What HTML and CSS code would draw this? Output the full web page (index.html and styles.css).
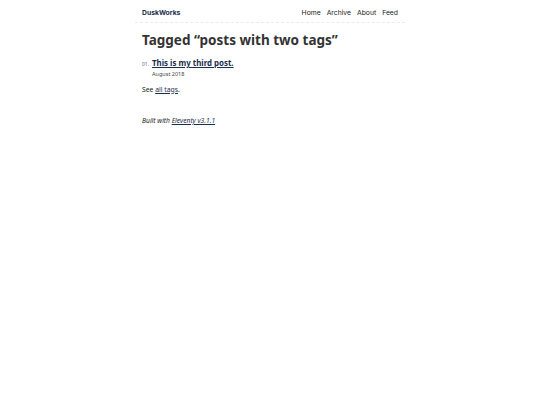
FILE: index.html
```html
<!DOCTYPE html>
<html lang="en">
<head>
<meta charset="utf-8">
<title>Tagged posts with two tags</title>
<link rel="stylesheet" href="styles.css">
</head>
<body>
<header class="site-header">
  <a class="home-link" href="#">DuskWorks</a>
  <nav class="nav">
    <a href="#">Home</a>
    <a href="#">Archive</a>
    <a href="#">About</a>
    <a href="#">Feed</a>
  </nav>
</header>
<main class="main">
  <h1 class="title">Tagged “posts with two tags”</h1>
  <ol class="postlist">
    <li class="post-item">
      <span class="post-num">01.</span>
      <div class="post-body">
        <a class="post-link" href="#">This is my third post.</a>
        <time class="post-date">August 2018</time>
      </div>
    </li>
  </ol>
  <p class="see">See <a href="#">all tags</a>.</p>
</main>
<footer class="footer">
  <p><em>Built with <a href="#">Eleventy v3.1.1</a></em></p>
</footer>
</body>
</html>
```
FILE: styles.css
```css
* { box-sizing: border-box; }
html, body { margin: 0; padding: 0; background: #fff; }
body {
  font-family: "Noto Sans", "Open Sans", sans-serif;
  color: #222;
  width: 270px;
  margin: 0 auto;
}
a { color: #1c2e4a; }
.site-header {
  display: flex;
  justify-content: space-between;
  align-items: center;
  padding: 8px 7px 5px;
  border-bottom: 1px dashed #ebebeb;
  font-family: Inter, "Liberation Sans", sans-serif;
  font-size: 6.8px;
}
.home-link {
  font-weight: 700;
  color: #1c2e4a;
  text-decoration: none;
}
.nav { display: flex; gap: 6px; }
.nav a { color: #222; text-decoration: none; }
.main { padding: 0 7px; }
.title {
  font-size: 13.5px;
  font-weight: 700;
  color: #333;
  margin: 9px 0 11px;
  line-height: 1.2;
}
.postlist { list-style: none; margin: 0; padding: 0; }
.post-item { display: flex; align-items: baseline; gap: 3px; }
.post-num { font-size: 5px; color: #666; }
.post-body { display: flex; flex-direction: column; }
.post-link { font-size: 7.9px; font-weight: 700; line-height: 1.2; }
.post-date { font-size: 5.5px; color: #444; margin-top: 1px; }
.see { font-size: 6.8px; margin: 7px 0 0; }
.footer { padding: 0 7px; font-size: 6.7px; margin-top: 22px; }
.footer p { margin: 0; }
```
